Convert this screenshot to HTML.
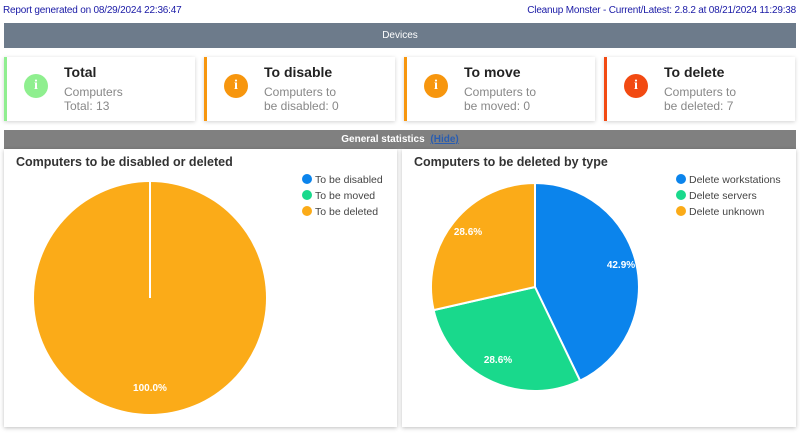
<!DOCTYPE html>
<html><head><meta charset="utf-8"><style>
*{margin:0;padding:0;box-sizing:border-box}
body{width:800px;height:436px;background:#fff;font-family:"Liberation Sans",sans-serif;position:relative;overflow:hidden}
.abs{position:absolute}
.top{top:5px;font-size:10px;color:#1a1aa6;letter-spacing:-0.2px}
.bar{left:4px;width:792px;color:#fff;font-size:10px;text-align:center}
.card{top:57px;width:191px;height:64px;background:#fff;box-shadow:0 1px 4px rgba(0,0,0,.18);border-left:3px solid}
.ic{position:absolute;left:17px;top:17px;width:24px;height:24px;border-radius:50%;color:#fff;font:bold 14px "Liberation Serif",serif;text-align:center;line-height:24px}
.ct{position:absolute;left:57px;top:7px;font-size:14px;font-weight:bold;color:#222}
.cs{position:absolute;left:57px;top:28px;font-size:12px;color:#888;line-height:14px}
.panel{top:149px;height:278px;background:#fff;box-shadow:0 1px 4px rgba(0,0,0,.25)}
.pt{position:absolute;left:12px;top:6px;font-size:12.5px;font-weight:bold;color:#333}
.lg{position:absolute;font-size:10.5px;color:#444;line-height:16px}
.lg span{display:inline-block;width:10px;height:10px;border-radius:50%;margin-right:3px;vertical-align:-1px}
</style></head><body>
<div class="abs top" style="left:3px">Report generated on 08/29/2024 22:36:47</div>
<div class="abs top" style="right:4px">Cleanup Monster - Current/Latest: 2.8.2 at 08/21/2024 11:29:38</div>
<div class="abs bar" style="top:23px;height:25px;line-height:25px;background:#6d7b8b">Devices</div>

<div class="abs card" style="left:4px;border-color:#90ee90"><div class="ic" style="background:#8fef8f">i</div><div class="ct">Total</div><div class="cs">Computers<br>Total: 13</div></div>
<div class="abs card" style="left:204px;border-color:#f7960e"><div class="ic" style="background:#f7960e">i</div><div class="ct">To disable</div><div class="cs">Computers to<br>be disabled: 0</div></div>
<div class="abs card" style="left:404px;border-color:#f7960e"><div class="ic" style="background:#f7960e">i</div><div class="ct">To move</div><div class="cs">Computers to<br>be moved: 0</div></div>
<div class="abs card" style="left:604px;border-color:#f24a12"><div class="ic" style="background:#f24a12">i</div><div class="ct">To delete</div><div class="cs">Computers to<br>be deleted: 7</div></div>

<div class="abs bar" style="top:130px;height:19px;line-height:19px;background:#808080;font-weight:bold">General statistics <u style="color:#2a5db0;margin-left:3px">(Hide)</u></div>

<div class="abs panel" style="left:4px;width:393px">
<div class="pt">Computers to be disabled or deleted</div>
<div class="lg" style="left:298px;top:23px"><span style="background:#0b84ec"></span>To be disabled<br><span style="background:#19d98c"></span>To be moved<br><span style="background:#fbab18"></span>To be deleted</div>
</div>
<div class="abs panel" style="left:402px;width:394px">
<div class="pt">Computers to be deleted by type</div>
<div class="lg" style="left:274px;top:23px"><span style="background:#0b84ec"></span>Delete workstations<br><span style="background:#19d98c"></span>Delete servers<br><span style="background:#fbab18"></span>Delete unknown</div>
</div>

<svg class="abs" style="left:0;top:0" width="800" height="436">
<circle cx="150" cy="298" r="116" fill="#fbab18"/>
<line x1="150" y1="182" x2="150" y2="298" stroke="#fff" stroke-width="2"/>
<text x="150" y="391" fill="#fff" font-size="10" font-weight="bold" text-anchor="middle" font-family="Liberation Sans">100.0%</text>
<g stroke="#fff" stroke-width="2" stroke-linejoin="round">
<path d="M535 287 L535 183 A104 104 0 0 1 580.1 380.7 Z" fill="#0b84ec"/>
<path d="M535 287 L580.1 380.7 A104 104 0 0 1 433.6 310.1 Z" fill="#19d98c"/>
<path d="M535 287 L433.6 310.1 A104 104 0 0 1 535 183 Z" fill="#fbab18"/>
</g>
<g fill="#fff" font-size="10" font-weight="bold" text-anchor="middle" font-family="Liberation Sans">
<text x="621" y="268">42.9%</text>
<text x="468" y="235">28.6%</text>
<text x="498" y="363">28.6%</text>
</g>
</svg>
</body></html>
